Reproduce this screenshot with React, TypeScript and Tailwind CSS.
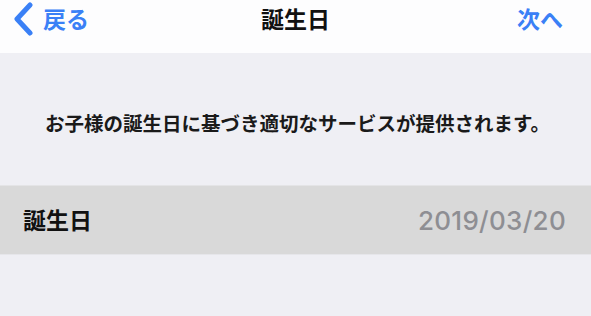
import React from "react";

export default function App() {
  const jp = { fontFamily: '"Noto Sans CJK JP", "Noto Sans", sans-serif' };
  return (
    <div className="w-[591px] h-[316px] bg-[#efeff4] overflow-hidden" style={jp}>
      <div className="h-[53px] bg-[#fdfdfe] flex items-center justify-between relative">
        <div className="flex items-center pl-[13px] text-[#3a80f6]">
          <svg width="21" height="34" viewBox="0 0 21 34" className="-mt-[16px]">
            <path d="M17 3 L4 17 L17 31" fill="none" stroke="#3a80f6" strokeWidth="5" strokeLinecap="round" strokeLinejoin="round" />
          </svg>
          <span className="ml-[9px] text-[23px] font-bold leading-none -mt-[16px]">戻る</span>
        </div>
        <div className="absolute left-0 right-0 top-[5px] text-center text-[23px] font-bold text-[#111] leading-[26px] pointer-events-none">
          誕生日
        </div>
        <span className="pr-[28px] text-[23px] font-bold text-[#3a80f6] leading-none -mt-[16px]">次へ</span>
      </div>
      <div className="pt-[58px] pb-[50px] text-center text-[19.5px] font-bold text-[#1a1a1a] leading-[24px] pl-[4px]">
        お子様の誕生日に基づき適切なサービスが提供されます。
      </div>
      <div className="h-[70px] bg-[#d9d9d9] border-t border-[#e4e4e6] border-b border-b-[#e6e6ea] flex items-center justify-between pl-[23px] pr-[25px]">
        <span className="text-[23px] font-bold text-[#111] -mt-[1px]">誕生日</span>
        <span className="text-[26px] font-medium text-[#8e8e93] tracking-[0.3px]" style={{ fontFamily: 'Inter, "Noto Sans", sans-serif' }}>2019/03/20</span>
      </div>
    </div>
  );
}
